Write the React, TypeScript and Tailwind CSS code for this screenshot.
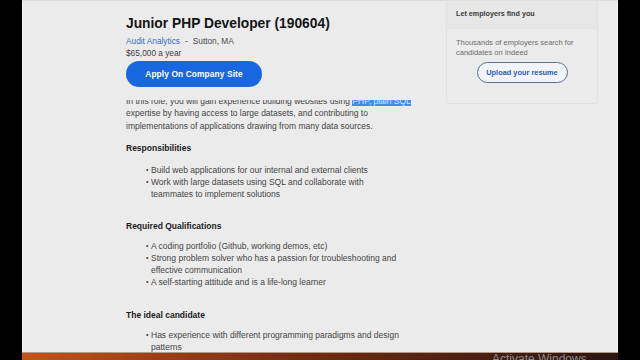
const responsibilities = [
  ["Build web applications for our internal and external clients"],
  ["Work with large datasets using SQL and collaborate with", "teammates to implement solutions"],
];

const qualifications = [
  ["A coding portfolio (Github, working demos, etc)"],
  ["Strong problem solver who has a passion for troubleshooting and", "effective communication"],
  ["A self-starting attitude and is a life-long learner"],
];

const ideal = [["Has experience with different programming paradigms and design", "patterns"]];

const BulletList = ({ items, className }: { items: string[][]; className?: string }) => (
  <ul className={`flex flex-col pl-[20px] ${className ?? ""}`}>
    {items.map((lines, i) => (
      <li key={i} className="flex leading-[12px]">
        <span className="w-[5px] shrink-0 text-[7px]">•</span>
        <span className="whitespace-nowrap">
          {lines.map((l, j) => (
            <span key={j} className="block">
              {l}
            </span>
          ))}
        </span>
      </li>
    ))}
  </ul>
);

export default function App() {
  return (
    <div
      className="w-[640px] h-[360px] bg-black flex flex-col overflow-hidden"
      style={{ fontFamily: '"Liberation Sans", Arial, sans-serif' }}>
      <div className="flex flex-1 min-h-0">
        <div className="w-[22px] shrink-0 bg-black" />
        <div className="w-[596px] shrink-0 bg-[#ebebeb] border-l border-r border-[#f7f7f7] border-t border-t-[#dcdcdc] flex">
          {/* main column */}
          <div className="ml-[103px] w-[300px] flex flex-col min-h-0">
            <div className="pt-[15px] flex flex-col">
              <h1 className="text-[13.8px] leading-[16px] font-bold text-[#151515] whitespace-nowrap">
                Junior PHP Developer (190604)
              </h1>
              <div className="mt-[3px] text-[8.3px] leading-[12px] text-[#4a4a4a] whitespace-nowrap">
                <span className="text-[#3a6cc4]">Audit Analytics</span>
                <span className="mx-[5px]">-</span>
                <span>Sutton, MA</span>
              </div>
              <div className="text-[8.3px] leading-[12px] text-[#3f3f3f]">$65,000 a year</div>
              <button className="mt-[2px] w-[136px] h-[26px] rounded-full bg-[#1866e0] text-white text-[8.4px] font-bold tracking-[0.1px]">
                Apply On Company Site
              </button>
            </div>
            <div className="mt-[13px] flex-1 min-h-0 overflow-hidden text-[8.5px] text-[#454545]">
              <div className="-mt-[5.5px] leading-[12.5px] whitespace-nowrap">
                <div>
                  In this role, you will gain experience building websites using{" "}
                  <span className="bg-[#3f8cf2] text-[#d8e6ff]">PHP, plain SQL</span>
                </div>
                <div>expertise by having access to large datasets, and contributing to</div>
                <div>implementations of applications drawing from many data sources.</div>
              </div>
              <h2 className="mt-[10px] font-bold text-[#1c1c1c] leading-[12px]">Responsibilities</h2>
              <BulletList items={responsibilities} className="mt-[10px]" />
              <h2 className="mt-[20px] font-bold text-[#1c1c1c] leading-[12px]">Required Qualifications</h2>
              <BulletList items={qualifications} className="mt-[8px]" />
              <h2 className="mt-[21px] font-bold text-[#1c1c1c] leading-[12px]">The ideal candidate</h2>
              <BulletList items={ideal} className="mt-[8px]" />
            </div>
          </div>

          {/* sidebar */}
          <div className="ml-[20px] w-[152px] flex flex-col">
            <div className="-mt-[1px] h-[104px] border border-[#e0e0e0] rounded-b-[3px] flex flex-col">
              <div className="h-[28px] bg-[#e7e7e7] border-b border-[#e2e2e2] px-[9px] flex items-center text-[7.2px] font-bold text-[#3a3a3a]">
                Let employers find you
              </div>
              <div className="px-[9px] pt-[9px] text-[7.5px] leading-[10px] text-[#6d6d6d]">
                <div>Thousands of employers search for</div>
                <div>candidates on Indeed</div>
              </div>
              <button className="mt-[4px] self-center w-[91px] h-[21px] rounded-full border-[1.5px] border-[#5a6e96] bg-[#f1f4fa] text-[7.4px] font-bold text-[#2d5cb8]">
                Upload your resume
              </button>
            </div>
          </div>
        </div>
        <div className="flex-1 bg-black" />
      </div>
      {/* desktop strip */}
      <div className="h-[8px] shrink-0 flex">
        <div className="w-[22px] bg-black" />
        <div className="w-[596px] relative overflow-hidden border-t border-[#b59a8a] bg-gradient-to-r from-[#c2531a] via-[#6e2a12] to-[#2a1510]">
          <span className="absolute left-[470px] top-[0px] text-[12px] leading-[12px] text-[#8c8c8c] whitespace-nowrap">
            Activate Windows
          </span>
        </div>
        <div className="flex-1 bg-black" />
      </div>
    </div>
  );
}
